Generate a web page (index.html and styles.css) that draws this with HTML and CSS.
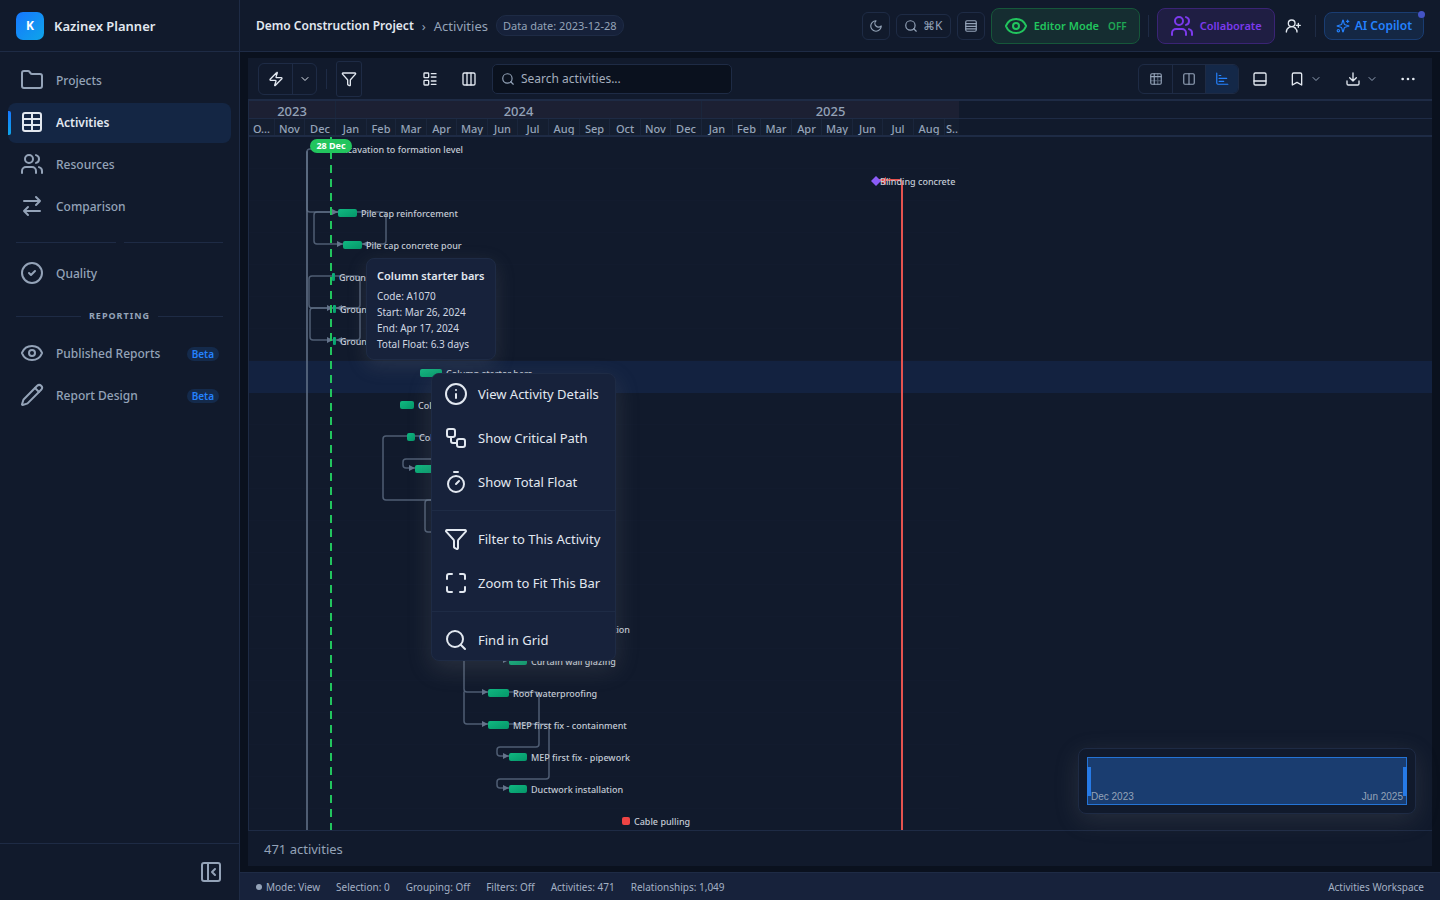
FILE: index.html
```
<!DOCTYPE html>
<html lang="en">

<head>
    <meta charset="utf-8">
    <title>Kazinex Planner</title>
    <link rel="stylesheet" href="styles.css">
</head>

<body>
    <!-- shared icons -->
    <svg class="defs" width="0" height="0" aria-hidden="true">
        <symbol id="users" viewBox="0 0 24 24"><path d="M16 21v-2a4 4 0 0 0-4-4H6a4 4 0 0 0-4 4v2"/><circle cx="9" cy="7" r="4"/><path d="M22 21v-2a4 4 0 0 0-3-3.87M16 3.13a4 4 0 0 1 0 7.75"/></symbol>
        <symbol id="eye" viewBox="0 0 24 24"><path d="M2.06 12.35a1 1 0 0 1 0-.7 10.75 10.75 0 0 1 19.88 0 1 1 0 0 1 0 .7 10.75 10.75 0 0 1-19.88 0z"/><circle cx="12" cy="12" r="3"/></symbol>
        <symbol id="search" viewBox="0 0 24 24"><circle cx="11" cy="11" r="8"/><path d="m21 21-4.3-4.3"/></symbol>
        <symbol id="filter" viewBox="0 0 24 24"><path d="M10 20a1 1 0 0 0 .55.9l2 1A1 1 0 0 0 14 21v-7a2 2 0 0 1 .52-1.34L21.74 4.67A1 1 0 0 0 21 3H3a1 1 0 0 0-.74 1.67l7.22 7.99A2 2 0 0 1 10 14z"/></symbol>
        <symbol id="chevron" viewBox="0 0 24 24"><path d="m6 9 6 6 6-6"/></symbol>
    </svg>

    <div class="app">
        <aside class="sidebar">
            <div class="brand">
                <span class="logo">K</span>
                <span>Kazinex Planner</span>
            </div>
            <nav class="nav">
                <a href="#projects"><svg viewBox="0 0 24 24"><path d="M20 20a2 2 0 0 0 2-2V8a2 2 0 0 0-2-2h-7.9a2 2 0 0 1-1.69-.9L9.6 3.9A2 2 0 0 0 7.93 3H4a2 2 0 0 0-2 2v13a2 2 0 0 0 2 2z"/></svg>Projects</a>
                <a href="#activities" class="active"><svg viewBox="0 0 24 24"><rect x="3" y="3" width="18" height="18" rx="2"/><path d="M12 3v18M3 9h18M3 15h18"/></svg>Activities</a>
                <a href="#resources"><svg><use href="#users"/></svg>Resources</a>
                <a href="#comparison"><svg viewBox="0 0 24 24"><path d="m16 3 4 4-4 4M20 7H4M8 21l-4-4 4-4M4 17h16"/></svg>Comparison</a>
                <div class="divider"><i></i><i></i></div>
                <a href="#quality"><svg viewBox="0 0 24 24"><circle cx="12" cy="12" r="10"/><path d="m9 12 2 2 4-4"/></svg>Quality</a>
                <div class="divider reporting"><i></i><span>REPORTING</span><i></i></div>
                <a href="#reports"><svg><use href="#eye"/></svg>Published Reports<span class="beta">Beta</span></a>
                <a href="#design"><svg viewBox="0 0 24 24"><path d="M21.17 6.81a1 1 0 0 0-3.98-3.98L3.84 16.17a2 2 0 0 0-.5.83l-1.32 4.35a.5.5 0 0 0 .62.63l4.35-1.32a2 2 0 0 0 .83-.5z"/><path d="m15 5 4 4"/></svg>Report Design<span class="beta">Beta</span></a>
            </nav>
            <div class="sidebar-foot">
                <button type="button" aria-label="Collapse sidebar"><svg viewBox="0 0 24 24"><rect x="3" y="3" width="18" height="18" rx="2"/><path d="M9 3v18M16 15l-3-3 3-3"/></svg></button>
            </div>
        </aside>

        <div class="main">
            <header class="topbar">
                <span class="project">Demo Construction Project</span>
                <span class="crumb-sep">›</span>
                <span class="crumb">Activities</span>
                <span class="date-pill">Data date: 2023-12-28</span>
                <div class="actions">
                    <button type="button" class="box-btn" aria-label="Theme"><svg viewBox="0 0 24 24"><path d="M12 3a6 6 0 0 0 9 9 9 9 0 1 1-9-9z"/></svg></button>
                    <button type="button" class="box-btn cmd"><svg><use href="#search"/></svg>⌘K</button>
                    <button type="button" class="box-btn" aria-label="Density"><svg viewBox="0 0 24 24"><rect x="3" y="3" width="18" height="18" rx="2"/><path d="M3 8h18M3 12.500h18M3 17h18"/></svg></button>
                    <button type="button" class="editor"><svg><use href="#eye"/></svg>Editor Mode <small>OFF</small></button>
                    <span class="vline"></span>
                    <button type="button" class="collab"><svg><use href="#users"/></svg>Collaborate</button>
                    <button type="button" class="invite" aria-label="Invite"><svg viewBox="0 0 24 24"><path d="M2 21a8 8 0 0 1 13.300-6"/><circle cx="10" cy="8" r="5"/><path d="M15.300 15a8 8 0 0 1 2.700 6M20 8v6M23 11h-6"/></svg></button>
                    <span class="vline"></span>
                    <button type="button" class="copilot"><svg viewBox="0 0 24 24"><path d="M9.940 15.500A2 2 0 0 0 8.500 14.060l-6.140-1.580a.5.5 0 0 1 0-.96L8.500 9.940A2 2 0 0 0 9.940 8.500l1.580-6.140a.5.5 0 0 1 .96 0l1.580 6.140a2 2 0 0 0 1.440 1.440l6.140 1.580a.5.5 0 0 1 0 .96l-6.140 1.580a2 2 0 0 0-1.440 1.440l-1.580 6.140a.5.5 0 0 1-.96 0z"/><path d="M20 2v4M22 4h-4"/><circle cx="4" cy="20" r="2"/></svg>AI Copilot<i class="dot"></i></button>
                </div>
            </header>

            <main class="panel">
                <div class="toolbar">
                    <div class="split">
                        <button type="button" aria-label="Run"><svg viewBox="0 0 24 24"><path d="M4 14a1 1 0 0 1-.78-1.630l9.900-10.200a.5.5 0 0 1 .86.460l-1.920 6.020A1 1 0 0 0 13 10h7a1 1 0 0 1 .78 1.630l-9.900 10.200a.5.5 0 0 1-.86-.460l1.920-6.020A1 1 0 0 0 11 14z"/></svg></button>
                        <button type="button" aria-label="Run options"><svg class="small"><use href="#chevron"/></svg></button>
                    </div>
                    <span class="vline"></span>
                    <button type="button" class="filter" aria-label="Filter"><svg><use href="#filter"/></svg></button>
                    <div class="view-tools">
                        <button type="button" class="tool" aria-label="Group"><svg viewBox="0 0 24 24"><rect x="3" y="3" width="7" height="7" rx="1"/><rect x="3" y="14" width="7" height="7" rx="1"/><path d="M14 4h7M14 9h7M14 15h7M14 20h7"/></svg></button>
                        <button type="button" class="tool" aria-label="Columns"><svg viewBox="0 0 24 24"><rect x="3" y="3" width="18" height="18" rx="2"/><path d="M9 3v18M15 3v18"/></svg></button>
                    </div>
                    <label class="search"><svg><use href="#search"/></svg><input type="text" placeholder="Search activities..." aria-label="Search activities"></label>
                    <div class="right">
                        <div class="segment">
                            <button type="button" aria-label="Grid"><svg viewBox="0 0 24 24"><rect x="3" y="3" width="18" height="18" rx="2"/><path d="M9 3v18M3 8h18"/><path d="M15 3v18M3 15h18" opacity=".5"/></svg></button>
                            <button type="button" aria-label="Split"><svg viewBox="0 0 24 24"><rect x="3" y="3" width="18" height="18" rx="2"/><path d="M12 3v18"/></svg></button>
                            <button type="button" class="on" aria-label="Gantt"><svg viewBox="0 0 24 24"><path d="M3 2v17a2 2 0 0 0 2 2h17M7 6h3M7 11h13M7 16h8"/></svg></button>
                        </div>
                        <button type="button" class="tool panel-btn" aria-label="Bottom panel"><svg viewBox="0 0 24 24"><rect x="3" y="3" width="18" height="18" rx="2"/><path d="M3 15h18"/></svg></button>
                        <button type="button" class="tool drop" aria-label="Bookmarks"><svg viewBox="0 0 24 24"><path d="m19 21-7-4-7 4V5a2 2 0 0 1 2-2h10a2 2 0 0 1 2 2z"/></svg><svg class="small"><use href="#chevron"/></svg></button>
                        <button type="button" class="tool drop" aria-label="Export"><svg viewBox="0 0 24 24"><path d="M21 15v4a2 2 0 0 1-2 2H5a2 2 0 0 1-2-2v-4M7 10l5 5 5-5M12 15V3"/></svg><svg class="small"><use href="#chevron"/></svg></button>
                        <button type="button" class="tool more" aria-label="More"><svg viewBox="0 0 24 24"><circle cx="12" cy="12" r="1"/><circle cx="20" cy="12" r="1"/><circle cx="4" cy="12" r="1"/></svg></button>
                    </div>
                </div>

                <div class="gantt">
                    <!-- one day is one pixel wide -->
                    <div class="scale">
                        <div class="years"><span style="width:87px">2023</span><span style="width:366px">2024</span><span style="width:257px">2025</span></div>
                        <div class="months">
                            <span style="width:26px">O...</span><span style="width:30px">Nov</span><span style="width:31px">Dec</span><span style="width:31px">Jan</span><span style="width:29px">Feb</span><span style="width:31px">Mar</span><span style="width:30px">Apr</span><span style="width:31px">May</span><span style="width:30px">Jun</span><span style="width:31px">Jul</span><span style="width:31px">Aug</span><span style="width:30px">Sep</span><span style="width:31px">Oct</span><span style="width:30px">Nov</span><span style="width:31px">Dec</span><span style="width:31px">Jan</span><span style="width:28px">Feb</span><span style="width:31px">Mar</span><span style="width:30px">Apr</span><span style="width:31px">May</span><span style="width:30px">Jun</span><span style="width:31px">Jul</span><span style="width:31px">Aug</span><span style="width:14px">S..</span>
                        </div>
                    </div>
                    <div class="chart">
                        <svg class="bars">
                            <defs>
                                <linearGradient id="green" x2="1" y2="1"><stop stop-color="#10b981"/><stop offset="1" stop-color="#059669"/></linearGradient>
                                <pattern id="rows" width="1200" height="32" patternUnits="userSpaceOnUse"><path class="grid" d="M0 31.500h1200"/></pattern>
                                <marker id="arrow" markerUnits="userSpaceOnUse" markerWidth="6" markerHeight="6" refX="6" refY="3" orient="auto"><path class="tip" d="M0 0l6 3-6 3z"/></marker>
                            </defs>
                            <rect width="710" height="100%" fill="url(#rows)"/>
                            <rect class="selected" y="224" width="100%" height="32"/>
                            <g class="links">
                                <path d="M80 12h-19q-3 0-3 3v57q0 3 3 3h28" marker-end="url(#arrow)"/>
                                <path d="M58 15v678"/>
                                <path d="M89 75h-21q-3 0-3 3v26q0 3 3 3h26" marker-end="url(#arrow)"/>
                                <path d="M108 75h26q3 0 3 3v26q0 3-3 3h-21" marker-end="url(#arrow)"/>
                                <path d="M83 139h-20q-3 0-3 3v26q0 3 3 3h21" marker-end="url(#arrow)"/>
                                <path d="M86 139h22q3 0 3 3v26q0 3-3 3h-21" marker-end="url(#arrow)"/>
                                <path d="M84 171h-20q-3 0-3 3v26q0 3 3 3h20" marker-end="url(#arrow)"/>
                                <path d="M87 171h21q3 0 3 3v26q0 3-3 3h-21" marker-end="url(#arrow)"/>
                                <path d="M176 299h-39q-3 0-3 3v58q0 3 3 3h55"/>
                                <path d="M192 322h-35q-3 0-3 3v3q0 3 3 3h9" marker-end="url(#arrow)"/>
                                <path d="M192 363h-13q-3 0-3 3v26q0 3 3 3h13"/>
                                <path d="M215 500v52q0 3 3 3h21" marker-end="url(#arrow)"/>
                                <path d="M215 555v29q0 3 3 3h21" marker-end="url(#arrow)"/>
                                <path d="M248 523h12" marker-end="url(#arrow)"/>
                                <path d="M260 555h27q3 0 3 3v49q0 3-3 3h-36q-3 0-3 3v3q0 3 3 3h9" marker-end="url(#arrow)"/>
                                <path d="M260 587h37q3 0 3 3v49q0 3-3 3h-46q-3 0-3 3v3q0 3 3 3h9" marker-end="url(#arrow)"/>
                            </g>
                            <path class="critical" d="M630 43h20q3 0 3 3v647"/>
                            <path class="critical-tip" d="M631 44l6-4v8z"/>
                            <g fill="url(#green)">
                                <rect x="89" y="72" width="19" height="8" rx="2"/>
                                <rect x="94" y="104" width="19" height="8" rx="2"/>
                                <rect x="83" y="136" width="3" height="8" rx="1"/>
                                <rect x="84" y="168" width="3" height="8" rx="1"/>
                                <rect x="84" y="200" width="3" height="8" rx="1"/>
                                <rect x="171" y="232" width="22" height="8" rx="2"/>
                                <rect x="151" y="264" width="14" height="8" rx="2"/>
                                <rect x="158" y="296" width="8" height="8" rx="2"/>
                                <rect x="166" y="328" width="22" height="8" rx="2"/>
                                <rect x="260" y="520" width="18" height="8" rx="2"/>
                                <rect x="239" y="552" width="21" height="8" rx="2"/>
                                <rect x="239" y="584" width="21" height="8" rx="2"/>
                                <rect x="260" y="616" width="18" height="8" rx="2"/>
                                <rect x="260" y="648" width="18" height="8" rx="2"/>
                            </g>
                            <rect class="late" x="373" y="680" width="8" height="8" rx="2"/>
                            <path class="milestone" d="M627 39l5 5-5 5-5-5z"/>
                            <g class="names">
                                <text x="214" y="16" text-anchor="end">Excavation to formation level</text>
                                <text x="631" y="48">Blinding concrete</text>
                                <text x="112" y="80">Pile cap reinforcement</text>
                                <text x="117" y="112">Pile cap concrete pour</text>
                                <text x="90" y="144">Ground</text>
                                <text x="91" y="176">Ground</text>
                                <text x="91" y="208">Ground</text>
                                <text x="197" y="240">Column starter bars</text>
                                <text x="169" y="272">Column</text>
                                <text x="170" y="304">Column</text>
                                <text x="381" y="496" text-anchor="end">installation</text>
                                <text x="282" y="528">Curtain wall glazing</text>
                                <text x="264" y="560">Roof waterproofing</text>
                                <text x="264" y="592">MEP first fix - containment</text>
                                <text x="282" y="624">MEP first fix - pipework</text>
                                <text x="282" y="656">Ductwork installation</text>
                                <text x="385" y="688">Cable pulling</text>
                            </g>
                            <path class="today" d="M82 0v693"/>
                        </svg>
                        <span class="today-label">28 Dec</span>

                        <div class="tooltip">
                            <strong>Column starter bars</strong>
                            <span>Code: A1070</span>
                            <span>Start: Mar 26, 2024</span>
                            <span>End: Apr 17, 2024</span>
                            <span>Total Float: 6.3 days</span>
                        </div>

                        <div class="menu">
                            <button type="button"><svg viewBox="0 0 24 24"><circle cx="12" cy="12" r="10"/><path d="M12 16v-4M12 8h.01"/></svg>View Activity Details</button>
                            <button type="button"><svg viewBox="0 0 24 24"><rect x="3" y="3" width="8" height="8" rx="2"/><path d="M7 11v4a2 2 0 0 0 2 2h4"/><rect x="13" y="13" width="8" height="8" rx="2"/></svg>Show Critical Path</button>
                            <button type="button"><svg viewBox="0 0 24 24"><path d="M10 2h4M12 14l3-3"/><circle cx="12" cy="14" r="8"/></svg>Show Total Float</button>
                            <hr>
                            <button type="button"><svg><use href="#filter"/></svg>Filter to This Activity</button>
                            <button type="button"><svg viewBox="0 0 24 24"><path d="M8 3H5a2 2 0 0 0-2 2v3M21 8V5a2 2 0 0 0-2-2h-3M3 16v3a2 2 0 0 0 2 2h3M16 21h3a2 2 0 0 0 2-2v-3"/></svg>Zoom to Fit This Bar</button>
                            <hr>
                            <button type="button"><svg><use href="#search"/></svg>Find in Grid</button>
                        </div>

                        <div class="minimap">
                            <div class="range"><span>Dec 2023</span><span>Jun 2025</span></div>
                        </div>
                    </div>
                </div>
                <div class="count">471 activities</div>
            </main>

            <footer class="status">
                <span class="mode">Mode: View</span>
                <span>Selection: 0</span>
                <span>Grouping: Off</span>
                <span>Filters: Off</span>
                <span>Activities: 471</span>
                <span>Relationships: 1,049</span>
                <span class="workspace">Activities Workspace</span>
            </footer>
        </div>
    </div>
</body>

</html>
```
FILE: styles.css
```
:root {
    --bg: #0a111e;
    --panel: #111a2c;
    --raised: #17223b;
    --border: #1e2b45;
    --text: #e2e8f0;
    --muted: #94a3b8;
}

* {
    box-sizing: border-box;
}

body {
    margin: 0;
    background: var(--bg);
    color: var(--text);
    font: 13px/20px "Noto Sans", sans-serif;
}

svg {
    fill: none;
    stroke: currentColor;
    stroke-width: 2;
    stroke-linecap: round;
    stroke-linejoin: round;
    flex: none;
}

.defs {
    position: absolute;
}

button {
    display: flex;
    align-items: center;
    justify-content: center;
    padding: 0;
    border: 0;
    background: none;
    color: inherit;
    font: inherit;
}

.app {
    display: flex;
    height: 100vh;
}

/* sidebar */
.sidebar {
    display: flex;
    flex-direction: column;
    flex: none;
    width: 240px;
    background: var(--panel);
    border-right: 1px solid var(--border);
}

.brand {
    display: flex;
    align-items: center;
    gap: 10px;
    height: 52px;
    padding: 0 16px;
    border-bottom: 1px solid var(--border);
    font-weight: 600;
}

.logo {
    width: 28px;
    height: 28px;
    border-radius: 7px;
    background: linear-gradient(135deg, #1677ff, #0ea5e9);
    color: #fff;
    font-size: 12px;
    font-weight: 700;
    line-height: 28px;
    text-align: center;
}

.nav {
    display: flex;
    flex: 1;
    flex-direction: column;
    gap: 2px;
    padding: 9px 8px;
}

.nav a {
    position: relative;
    display: flex;
    align-items: center;
    gap: 12px;
    height: 40px;
    padding: 0 12px;
    border-radius: 8px;
    color: var(--muted);
    font-size: 12px;
    font-weight: 500;
    text-decoration: none;
}

.nav svg {
    width: 24px;
    height: 24px;
    margin-bottom: 2px;
}

.nav .active {
    background: #142644;
    color: var(--text);
    font-weight: 600;
}

.nav .active::before {
    content: "";
    position: absolute;
    left: 0;
    top: 8px;
    width: 3px;
    height: 24px;
    border-radius: 0 2px 2px 0;
    background: linear-gradient(#1677ff, #0ea5e9);
}

.divider {
    display: flex;
    align-items: center;
    gap: 8px;
    height: 23px;
    padding: 3px 8px 0;
}

.divider i {
    flex: 1;
    height: 1px;
    background: var(--border);
}

.reporting {
    height: 36px;
    padding-top: 4px;
    color: var(--muted);
    font-size: 9px;
    font-weight: 700;
    letter-spacing: 1px;
}

.beta {
    margin-left: auto;
    padding: 0 5px;
    border-radius: 8px;
    background: #142a4b;
    color: #2482ff;
    font-size: 10px;
    font-weight: 600;
    line-height: 14px;
}

.sidebar-foot {
    display: flex;
    justify-content: flex-end;
    height: 57px;
    padding: 0 16px;
    border-top: 1px solid var(--border);
    color: var(--muted);
}

.sidebar-foot svg {
    width: 24px;
    height: 24px;
}

/* top bar */
.main {
    display: flex;
    flex: 1;
    flex-direction: column;
    min-width: 0;
}

.topbar {
    display: flex;
    align-items: center;
    gap: 8px;
    flex: none;
    height: 52px;
    padding: 0 16px;
    background: var(--panel);
    border-bottom: 1px solid var(--border);
}

.project {
    font-size: 12px;
    font-weight: 600;
}

.crumb-sep,
.crumb {
    color: var(--muted);
}

.date-pill {
    padding: 0 6px;
    border: 1px solid var(--border);
    border-radius: 10px;
    background: #16213a;
    color: var(--muted);
    font-size: 11px;
    line-height: 19px;
}

.actions {
    display: flex;
    align-items: center;
    gap: 6px;
    margin-left: auto;
}

.box-btn {
    gap: 5px;
    width: 28px;
    height: 28px;
    border: 1px solid var(--border);
    border-radius: 6px;
    color: var(--muted);
}

.box-btn svg,
.copilot svg {
    width: 14px;
    height: 14px;
}

.cmd {
    width: 55px;
    height: 24px;
    font-size: 12px;
}

.editor,
.collab {
    gap: 6px;
    height: 36px;
    padding: 0 12px;
    border-radius: 8px;
    font-size: 11px;
    font-weight: 600;
}

.editor svg,
.collab svg {
    width: 24px;
    height: 24px;
}

.editor {
    border: 1px solid #16573a;
    background: #152d31;
    color: #22c55e;
}

.editor small {
    margin-left: 3px;
    font-size: 10px;
    opacity: .8;
}

.collab {
    border: 1px solid #3a2475;
    background: #1f1e43;
    color: #7c3aed;
}

.vline {
    width: 1px;
    height: 22px;
    margin: 0 2px;
    background: var(--border);
}

.invite {
    width: 24px;
    margin-right: 2px;
}

.invite svg {
    width: 16px;
    height: 16px;
}

.copilot {
    position: relative;
    gap: 5px;
    height: 28px;
    padding: 0 11px;
    border: 1px solid #1a3d72;
    border-radius: 8px;
    background: #142744;
    color: #2482ff;
    font-size: 12px;
    font-weight: 600;
}

.dot {
    position: absolute;
    top: -2px;
    right: -2px;
    width: 7px;
    height: 7px;
    border-radius: 50%;
    background: #4453c4;
}

/* toolbar */
.panel {
    display: flex;
    flex: 1;
    flex-direction: column;
    min-height: 0;
    margin: 6px 8px;
    background: var(--panel);
}

.toolbar {
    display: flex;
    align-items: center;
    flex: none;
    height: 41px;
    padding: 0 10px;
}

.toolbar svg {
    width: 16px;
    height: 16px;
}

.toolbar .small {
    width: 12px;
    height: 12px;
}

.split {
    display: flex;
    height: 32px;
    border: 1px solid var(--border);
    border-radius: 6px;
}

.split button {
    width: 33px;
}

.split button + button {
    width: 24px;
    border-left: 1px solid var(--border);
}

.toolbar .vline {
    height: 20px;
    margin: 0 9px;
}

.filter {
    width: 26px;
    height: 36px;
    border: 1px solid var(--border);
    border-radius: 3px;
}

.view-tools {
    display: flex;
    gap: 7px;
    margin-left: 52px;
}

.tool {
    width: 32px;
    height: 32px;
}

.search {
    display: flex;
    align-items: center;
    gap: 6px;
    width: 240px;
    height: 30px;
    margin-left: 7px;
    padding: 0 8px;
    border: 1px solid var(--border);
    border-radius: 5px;
    background: var(--bg);
    color: var(--muted);
}

.search svg {
    width: 14px;
    height: 14px;
}

.search input {
    flex: 1;
    min-width: 0;
    padding: 0;
    border: 0;
    outline: 0;
    background: none;
    color: inherit;
    font: 12px/20px "Noto Sans", sans-serif;
}

.search input::placeholder {
    color: #a3adbd;
}

.right {
    display: flex;
    align-items: center;
    margin-left: auto;
}

.segment {
    display: flex;
    height: 30px;
    overflow: hidden;
    border: 1px solid var(--border);
    border-radius: 6px;
    color: var(--muted);
}

.segment button {
    width: 33px;
}

.segment button + button {
    border-left: 1px solid var(--border);
}

.segment .on {
    background: #142848;
    color: #2482ff;
}

.toolbar .segment svg {
    width: 14px;
    height: 14px;
}

.panel-btn {
    margin: 0 5px;
}

.drop {
    gap: 5px;
    width: 48px;
    margin-right: 8px;
}

.drop .small {
    color: var(--muted);
}

.more {
    width: 29px;
}

/* gantt */
.gantt {
    display: flex;
    flex: 1;
    flex-direction: column;
    min-height: 0;
    border-left: 1px solid var(--border);
}

.scale {
    flex: none;
    border-top: 2px solid var(--border);
    border-bottom: 2px solid var(--border);
    color: var(--muted);
    font-weight: 500;
    text-align: center;
}

.years,
.months {
    display: flex;
}

.years {
    height: 18px;
    border-bottom: 1px solid var(--border);
    line-height: 20px;
}

.months {
    height: 16px;
    font-size: 11px;
    line-height: 19px;
}

.years span,
.months span {
    flex: none;
    overflow: hidden;
    border-right: 1px solid #1a263c;
    white-space: nowrap;
}

.years span {
    background: #1c2033;
}

.months span {
    background: #141e30;
}

.years span:last-child,
.months span:last-child {
    border-right: 0;
}

.chart {
    position: relative;
    flex: 1;
    min-height: 0;
}

.bars {
    display: block;
    width: 100%;
    height: 100%;
    stroke: none;
}

.grid {
    stroke: #121b2e;
    stroke-width: 1;
}

.selected {
    fill: #132240;
}

.links path {
    stroke: #64748b;
    stroke-opacity: .75;
    stroke-width: 1.5;
}

.links path:nth-child(2) {
    stroke-width: 2;
}

.tip {
    fill: #64748b;
}

.critical {
    stroke: #e5534f;
    stroke-width: 2;
}

.critical-tip,
.late {
    fill: #ef4444;
}

.milestone {
    fill: #8b5cf6;
}

.names {
    fill: #c3cad5;
    font-size: 9px;
    font-weight: 500;
}

.today {
    stroke: #22c55e;
    stroke-width: 2;
    stroke-linecap: butt;
    stroke-dasharray: 8 6;
}

.today-label {
    position: absolute;
    left: 61px;
    top: 2px;
    width: 42px;
    border-radius: 7px;
    background: #22c55e;
    color: #fff;
    font-size: 9px;
    font-weight: 700;
    line-height: 14px;
    text-align: center;
}

.tooltip {
    position: absolute;
    left: 117px;
    top: 121px;
    display: flex;
    flex-direction: column;
    padding: 7px 10px;
    border: 1px solid var(--border);
    border-radius: 8px;
    background: var(--raised);
    box-shadow: 0 6px 20px rgba(140, 140, 140, .18);
    color: #d0d7e2;
    font-size: 10px;
    line-height: 16px;
}

.tooltip strong {
    margin-bottom: 2px;
    color: var(--text);
    font-size: 11px;
    font-weight: 600;
    line-height: 20px;
}

.menu {
    position: absolute;
    left: 182px;
    top: 236px;
    display: flex;
    flex-direction: column;
    gap: 4px;
    width: 185px;
    border: 1px solid var(--border);
    border-radius: 8px;
    background: var(--raised);
    box-shadow: 0 8px 24px rgba(140, 140, 140, .2);
}

.menu button {
    gap: 10px;
    justify-content: flex-start;
    height: 40px;
    padding: 0 12px;
    white-space: nowrap;
}

.menu svg {
    width: 24px;
    height: 24px;
}

.menu hr {
    width: 100%;
    margin: 4px 0;
    border: 0;
    border-top: 1px solid var(--border);
}

.minimap {
    position: absolute;
    right: 16px;
    bottom: 16px;
    width: 338px;
    padding: 8px;
    border: 1px solid var(--border);
    border-radius: 8px;
    background: var(--panel);
    box-shadow: 0 6px 24px rgba(140, 140, 140, .18);
}

.range {
    position: relative;
    display: flex;
    align-items: flex-end;
    justify-content: space-between;
    height: 48px;
    padding: 0 3px;
    border: 1px solid #2474d6;
    background: #1a3d70;
    color: var(--muted);
    font: 10px/14px "Liberation Sans", sans-serif;
}

.range::before,
.range::after {
    content: "";
    position: absolute;
    top: 9px;
    left: -1px;
    width: 4px;
    height: 29px;
    background: #267ae6;
}

.range::after {
    right: -1px;
    left: auto;
}

.count {
    flex: none;
    height: 36px;
    padding: 0 16px;
    border-top: 1px solid var(--border);
    color: var(--muted);
    line-height: 36px;
}

.status {
    display: flex;
    align-items: center;
    gap: 16px;
    flex: none;
    height: 28px;
    padding: 0 16px;
    border-top: 1px solid var(--border);
    background: var(--raised);
    color: #a3b0c4;
    font-size: 10px;
}

.mode::before {
    content: "";
    display: inline-block;
    width: 6px;
    height: 6px;
    margin-right: 4px;
    border-radius: 50%;
    background: var(--muted);
    vertical-align: 1px;
}

.workspace {
    margin-left: auto;
}
```
